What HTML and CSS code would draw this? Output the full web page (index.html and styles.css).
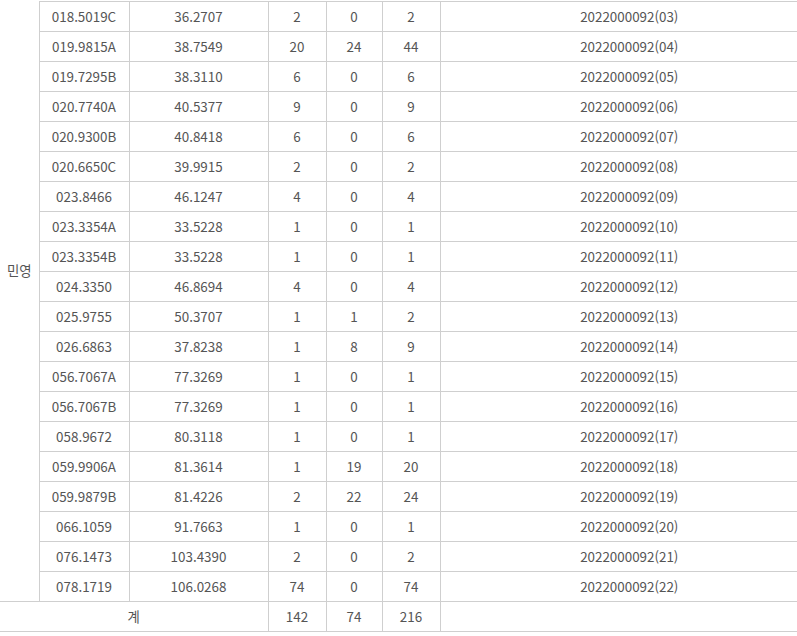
FILE: index.html
```html
<!DOCTYPE html>
<html lang="ko">
<head>
<meta charset="utf-8">
<link rel="stylesheet" href="styles.css">
</head>
<body>
<div class="viewport">
<table class="tbl">
<colgroup>
<col class="c1"><col class="c2"><col class="c3"><col class="c4"><col class="c5"><col class="c6"><col class="c7">
</colgroup>
<tbody>
<tr><td rowspan="20" class="type"><span class="type-label">민영</span></td><td>018.5019C</td><td>36.2707</td><td>2</td><td>0</td><td>2</td><td>2022000092(03)</td></tr>
<tr><td>019.9815A</td><td>38.7549</td><td>20</td><td>24</td><td>44</td><td>2022000092(04)</td></tr>
<tr><td>019.7295B</td><td>38.3110</td><td>6</td><td>0</td><td>6</td><td>2022000092(05)</td></tr>
<tr><td>020.7740A</td><td>40.5377</td><td>9</td><td>0</td><td>9</td><td>2022000092(06)</td></tr>
<tr><td>020.9300B</td><td>40.8418</td><td>6</td><td>0</td><td>6</td><td>2022000092(07)</td></tr>
<tr><td>020.6650C</td><td>39.9915</td><td>2</td><td>0</td><td>2</td><td>2022000092(08)</td></tr>
<tr><td>023.8466</td><td>46.1247</td><td>4</td><td>0</td><td>4</td><td>2022000092(09)</td></tr>
<tr><td>023.3354A</td><td>33.5228</td><td>1</td><td>0</td><td>1</td><td>2022000092(10)</td></tr>
<tr><td>023.3354B</td><td>33.5228</td><td>1</td><td>0</td><td>1</td><td>2022000092(11)</td></tr>
<tr><td>024.3350</td><td>46.8694</td><td>4</td><td>0</td><td>4</td><td>2022000092(12)</td></tr>
<tr><td>025.9755</td><td>50.3707</td><td>1</td><td>1</td><td>2</td><td>2022000092(13)</td></tr>
<tr><td>026.6863</td><td>37.8238</td><td>1</td><td>8</td><td>9</td><td>2022000092(14)</td></tr>
<tr><td>056.7067A</td><td>77.3269</td><td>1</td><td>0</td><td>1</td><td>2022000092(15)</td></tr>
<tr><td>056.7067B</td><td>77.3269</td><td>1</td><td>0</td><td>1</td><td>2022000092(16)</td></tr>
<tr><td>058.9672</td><td>80.3118</td><td>1</td><td>0</td><td>1</td><td>2022000092(17)</td></tr>
<tr><td>059.9906A</td><td>81.3614</td><td>1</td><td>19</td><td>20</td><td>2022000092(18)</td></tr>
<tr><td>059.9879B</td><td>81.4226</td><td>2</td><td>22</td><td>24</td><td>2022000092(19)</td></tr>
<tr><td>066.1059</td><td>91.7663</td><td>1</td><td>0</td><td>1</td><td>2022000092(20)</td></tr>
<tr><td>076.1473</td><td>103.4390</td><td>2</td><td>0</td><td>2</td><td>2022000092(21)</td></tr>
<tr><td>078.1719</td><td>106.0268</td><td>74</td><td>0</td><td>74</td><td>2022000092(22)</td></tr>
<tr><td colspan="3">계</td><td>142</td><td>74</td><td>216</td><td></td></tr>
</tbody>
</table>
</div>
</body>
</html>
```
FILE: styles.css
```css
html, body {
  margin: 0;
  padding: 0;
  background: #fff;
}
.viewport {
  width: 797px;
  height: 636px;
  padding-top: 1px;
  box-sizing: border-box;
  overflow: hidden;
}
.tbl {
  width: 818px;
  border-collapse: collapse;
  table-layout: fixed;
  font-family: "Noto Sans CJK KR", "Noto Sans", sans-serif;
  font-size: 13.4px;
  color: #555;
}
.c1 { width: 39px; }
.c2 { width: 90px; }
.c3 { width: 139px; }
.c4 { width: 58px; }
.c5 { width: 56px; }
.c6 { width: 58px; }
.c7 { width: auto; }
.tbl td {
  height: 28px;
  padding: 0 0 1px;
  text-align: center;
  vertical-align: middle;
  border: 1px solid #cfcfcf;
  line-height: 18px;
}
.tbl tr td:first-child { border-left: 0; }
.tbl tr td:last-child { border-right: 0; }
.tbl td.type {
  border-left: 0;
  border-top: 0;
  padding-bottom: 62px;
}
.type-label { display: inline-block; }
```
